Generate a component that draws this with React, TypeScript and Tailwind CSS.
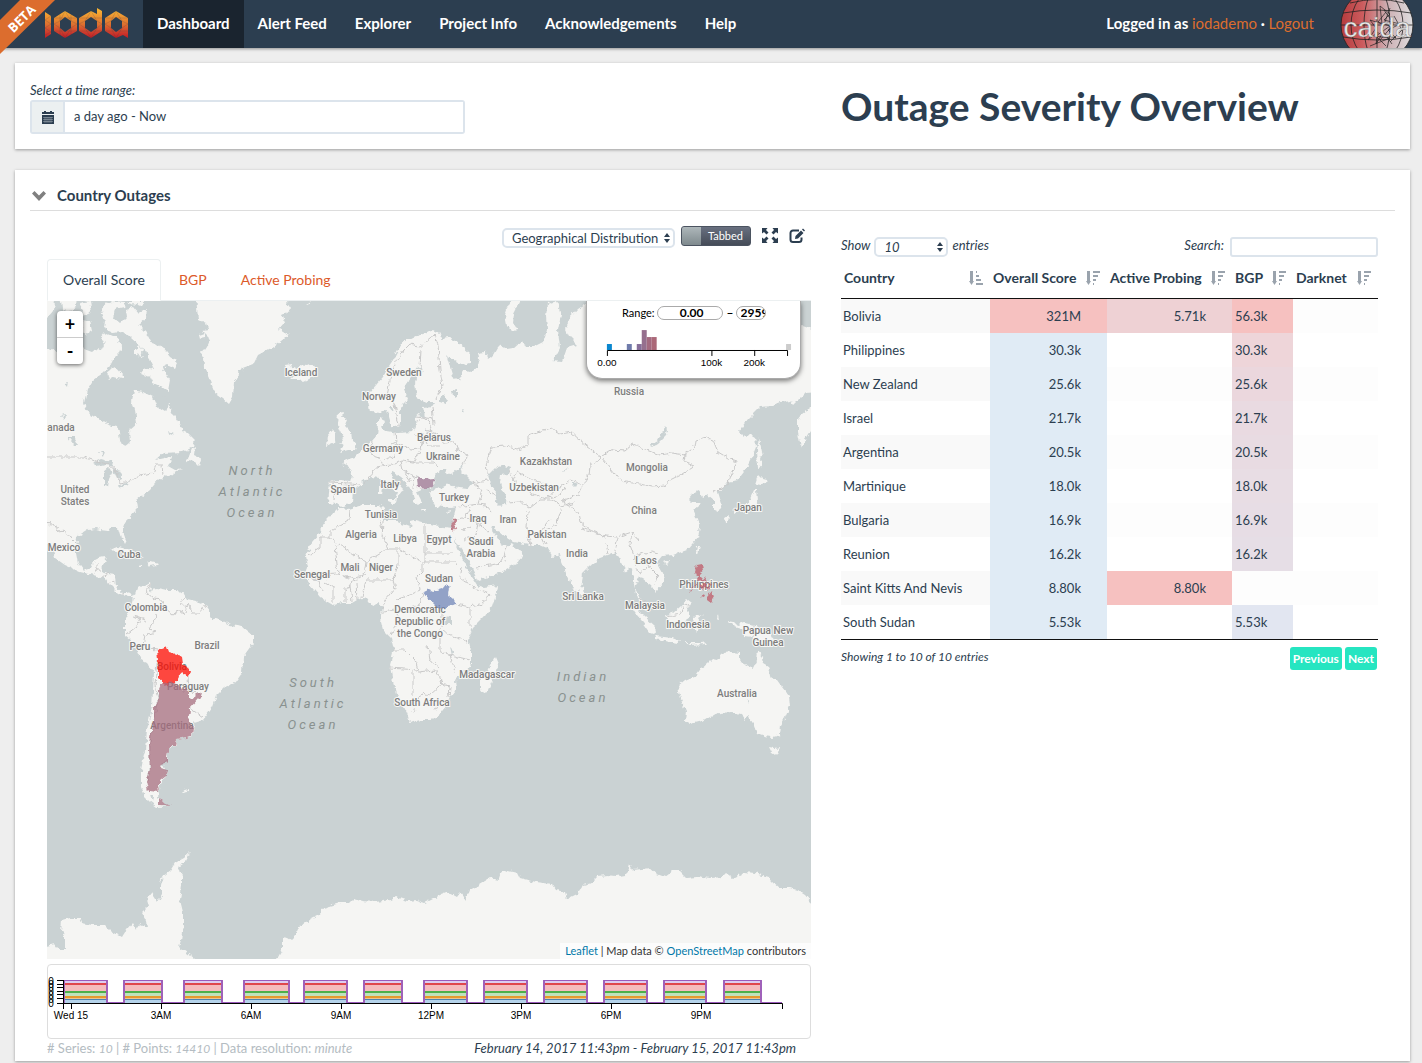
import React, { useState } from "react";

const navItems = ["Dashboard", "Alert Feed", "Explorer", "Project Info", "Acknowledgements", "Help"];

const columns = [
  { label: "Country", width: "w-[149px]", asc: true },
  { label: "Overall Score", width: "w-[117px]", asc: false },
  { label: "Active Probing", width: "w-[125px]", asc: false },
  { label: "BGP", width: "w-[61px]", asc: false },
  { label: "Darknet", width: "w-[85px]", asc: false },
];

const rows = [
  { country: "Bolivia", overall: "321M", overallBg: "bg-[#f6c1c0]", probing: "5.71k", probingBg: "bg-[#eed1d4]", bgp: "56.3k", bgpBg: "bg-[#f6c1c0]" },
  { country: "Philippines", overall: "30.3k", overallBg: "bg-[#e0ebf5]", probing: "", probingBg: "", bgp: "30.3k", bgpBg: "bg-[#eed5d9]" },
  { country: "New Zealand", overall: "25.6k", overallBg: "bg-[#e0ebf5]", probing: "", probingBg: "", bgp: "25.6k", bgpBg: "bg-[#ebd7dd]" },
  { country: "Israel", overall: "21.7k", overallBg: "bg-[#e0ebf5]", probing: "", probingBg: "", bgp: "21.7k", bgpBg: "bg-[#e9dae1]" },
  { country: "Argentina", overall: "20.5k", overallBg: "bg-[#e0ebf5]", probing: "", probingBg: "", bgp: "20.5k", bgpBg: "bg-[#e8dbe2]" },
  { country: "Martinique", overall: "18.0k", overallBg: "bg-[#e0ebf5]", probing: "", probingBg: "", bgp: "18.0k", bgpBg: "bg-[#e8dde4]" },
  { country: "Bulgaria", overall: "16.9k", overallBg: "bg-[#e0ebf5]", probing: "", probingBg: "", bgp: "16.9k", bgpBg: "bg-[#e7dde5]" },
  { country: "Reunion", overall: "16.2k", overallBg: "bg-[#e0ebf5]", probing: "", probingBg: "", bgp: "16.2k", bgpBg: "bg-[#e6dee6]" },
  { country: "Saint Kitts And Nevis", overall: "8.80k", overallBg: "bg-[#e0ebf5]", probing: "8.80k", probingBg: "bg-[#f6c1c0]", bgp: "", bgpBg: "" },
  { country: "South Sudan", overall: "5.53k", overallBg: "bg-[#e0ebf5]", probing: "", probingBg: "", bgp: "5.53k", bgpBg: "bg-[#e2e6f1]" },
];

const land = [
  // North and Central America
  "M40 351L53 349L58 352L62 347L70 344L74 347L80 345L84 349L92 352L97 348L101 351L104 345L101 338L105 333L112 336L118 338L121 345L119 354L113 360L110 366L103 373L93 380L87 390L84 403L87 412L100 420L109 425L118 427L120 440L125 447L130 443L129 430L137 423L135 410L132 402L134 390L143 392L153 397L157 407L165 412L168 403L173 413L183 430L188 433L195 440L193 447L183 452L163 453L155 460L164 458L172 457L168 466L175 470L182 468L174 473L168 478L165 475L158 480L150 490L137 500L138 508L125 522L122 530L126 541L121 538L118 528L110 528L108 531L100 530L96 529L88 530L77 537L76 552L78 563L83 570L92 567L97 557L106 556L103 565L102 572L108 574L115 575L116 587L123 593L130 591L134 597L128 597L118 593L108 583L105 578L93 575L80 572L65 565L55 558L53 550L40 538Z",
  "M40 294L56 294L54 310L47 318L40 320ZM60 294L77 294L76 308L69 312L62 309ZM80 303L90 301L92 312L84 316ZM60 318L70 315L77 320L74 330L63 331ZM80 320L90 321L92 330L84 334Z",
  // Baffin and its neighbours
  "M101 310L106 303L113 301L125 302L124 307L115 309L113 318L120 324L127 317L126 309L133 307L138 313L147 309L146 319L139 325L147 333L152 343L163 347L170 356L178 361L174 369L166 365L163 370L170 380L168 391L160 386L153 383L150 377L140 373L144 368L154 370L150 362L146 350L138 345L130 338L122 331L112 332L104 328L105 321Z",
  "M127 301L145 301L141 306L132 304ZM135 349L139 346L143 350L141 356L135 354ZM107 372L115 366L124 376L122 379L114 377L109 380ZM187 461L192 449L195 447L194 455L202 459L200 466L196 462Z",
  "M99 367L102 369L103 373L100 371Z",
  // Greenland and Iceland
  "M196 294L198 320L206 324L208 330L203 331L210 338L206 347L202 353L204 365L210 380L215 393L222 398L229 404L233 397L234 382L240 370L253 365L258 355L273 347L289 335L282 331L279 329L285 322L282 314L290 310L286 304L295 294Z",
  "M199 335L205 333L205 338L200 339ZM286 365L292 364L293 368L299 365L307 366L312 364L316 370L313 377L303 382L297 379L291 379L293 374L288 373Z",
  // Cuba and Hispaniola
  "M110 550L117 547L128 549L137 553L143 557L133 556L123 552ZM147 563L151 561L159 563L157 565L149 566ZM138 566L143 565L143 567L138 567ZM122 540L126 540L124 544Z",
  // South America
  "M134 597L137 588L145 586L150 583L151 589L157 588L167 590L177 590L184 594L187 599L196 601L207 605L210 613L213 618L222 621L230 625L243 627L253 635L253 643L243 657L242 673L235 683L225 687L217 695L213 707L203 720L193 723L194 730L192 737L177 740L177 746L168 747L168 757L162 763L167 773L160 784L158 797L165 804L170 806L157 807L149 801L145 797L141 787L141 770L145 750L147 730L152 707L154 673L147 663L141 660L137 650L131 640L125 635L125 620L132 607Z",
  "M182 791L188 789L188 791L183 792Z",
  // Eurasia
  "M380 413L370 412L368 400L369 393L376 385L383 377L389 366L393 360L400 347L404 341L410 338L418 336L427 333L433 330L442 335L441 339L449 338L457 342L470 353L470 362L463 365L456 361L447 357L450 367L453 377L460 380L463 370L470 372L477 367L479 358L478 353L485 352L488 359L493 355L497 348L500 345L507 349L513 348L522 340L526 347L533 347L543 342L547 330L546 316L548 304L557 301L561 315L558 330L560 348L553 361L562 362L567 348L577 345L570 338L565 328L570 318L578 309L587 303L800 303L800 325L820 332L820 391L806 392L800 398L793 405L790 401L780 403L773 406L760 407L752 415L747 420L739 431L745 437L750 434L755 437L756 447L752 457L747 467L737 480L728 482L723 488L718 492L722 505L718 512L714 510L714 500L708 495L703 498L700 493L699 490L692 493L688 498L693 503L702 503L693 510L697 519L700 527L698 537L687 550L673 555L662 556L657 562L663 573L664 582L655 592L651 585L648 583L642 578L639 577L635 587L640 598L646 602L650 611L645 609L637 597L633 580L632 567L625 572L622 562L615 552L608 555L600 558L590 566L583 573L582 583L577 592L574 590L570 582L562 562L560 554L553 557L547 548L540 545L530 545L513 542L507 538L500 532L493 527L492 530L500 542L507 547L512 544L514 547L523 553L518 563L508 568L500 573L478 581L475 575L467 557L457 543L454 536L452 525L454 517L456 507L450 508L443 507L437 506L432 503L430 493L433 489L426 488L417 492L420 498L422 502L418 505L415 503L412 492L407 483L401 478L397 475L394 471L390 472L393 480L399 485L403 490L400 492L398 498L395 499L397 493L388 487L380 478L372 477L366 479L362 482L362 486L353 492L352 502L344 506L340 507L336 504L328 503L330 482L340 481L350 482L352 474L349 467L342 462L349 459L355 457L361 451L367 445L372 441L377 435L378 425L378 420L382 418L384 422L381 427L385 431L398 433L413 432L416 426L415 420L417 414L425 417L423 407L431 406L437 402L427 402L417 398L415 383L418 374L423 370L417 366L413 375L406 385L404 389L408 399L403 404L400 412L400 425L395 427L392 427L387 410Z",
  // Novaya Zemlya
  "M515 294L507 309L505 315L507 325L513 331L517 330L512 322L513 314L523 294Z",
  // Britain and Ireland
  "M338 413L344 412L343 417L348 420L345 427L351 433L352 440L357 444L355 450L347 450L340 452L344 446L340 443L344 437L340 432L337 424ZM327 436L332 430L336 433L335 442L326 446ZM307 303L310 301L308 305Z",
  // Mediterranean islands
  "M388 499L396 499L395 504L388 501ZM379 487L382 487L381 494L379 494ZM381 480L383 483L381 485ZM420 509L427 509L426 511L421 511ZM447 511L452 510L449 513Z",
  // Africa
  "M338 508L350 509L362 505L380 505L384 509L383 520L393 520L402 524L410 527L411 521L415 520L425 523L434 525L443 527L452 528L454 535L456 544L462 558L467 568L472 577L477 585L485 587L498 585L497 592L492 607L484 617L473 628L468 638L471 650L471 665L463 672L455 680L456 690L450 697L447 705L440 714L430 720L420 720L410 723L407 713L402 703L397 697L393 682L390 665L394 650L391 638L383 630L381 622L383 607L378 604L372 606L367 599L363 598L357 600L352 603L342 603L333 605L326 601L320 597L314 590L308 583L306 577L308 567L306 557L312 542L320 533L325 522L330 517L335 511Z",
  "M480 681L482 674L488 671L495 657L498 664L495 674L488 691L483 692L480 688Z",
  // Asian islands
  "M757 490L758 500L756 505L749 508L743 513L740 510L734 514L732 512L738 508L745 506L751 499L755 490ZM759 475L763 479L767 480L761 485L756 484ZM724 518L729 515L728 523L725 523ZM759 438L761 447L763 457L760 458L761 467L758 468L757 450ZM697 546L700 546L698 553L696 550ZM664 562L669 560L668 564L665 565ZM820 401L811 407L803 413L798 420L798 433L801 447L805 440L811 430L820 424Z",
  "M579 586L583 588L584 594L580 595ZM630 605L638 610L645 617L655 626L656 634L650 632L643 622L635 613ZM655 636L664 637L672 638L680 641L678 643L665 641L656 639ZM665 615L672 614L681 606L687 599L692 603L688 609L689 615L686 624L678 626L668 624ZM693 617L704 615L698 619L703 627L699 626L696 632L694 625ZM684 643L700 643L708 642L706 644L690 645ZM718 614L719 620L717 618ZM728 620L734 621L738 625L745 623L753 625L765 630L771 634L774 640L781 645L774 643L767 639L760 641L753 638L745 637L745 630L735 627Z",
  "M582 589L584 592L583 596L579 594Z",
  // Australia
  "M678 686L685 680L697 675L702 668L707 664L712 659L717 660L721 655L725 653L731 652L740 653L740 660L742 663L753 669L757 661L758 651L762 656L763 663L768 666L770 676L777 680L782 687L789 696L790 706L785 718L781 725L780 735L772 737L765 736L757 733L754 725L751 722L749 717L745 720L741 714L732 712L720 713L710 716L702 721L690 724L685 721L686 711L681 700Z",
  "M769 747L774 748L779 747L777 754L773 755Z",
  // Antarctica
  "M40 947L54 944L58 949L65 949L65 936L61 930L62 920L69 918L80 918L82 923L92 925L105 925L111 931L122 937L127 929L132 923L136 930L140 924L147 929L146 920L142 913L149 906L147 899L152 893L158 902L162 895L162 884L165 873L163 879L159 881L162 877L170 871L175 863L184 858L190 853L186 861L177 867L182 875L182 885L180 900L183 912L183 925L181 940L179 947L195 959L203 968L40 968Z",
  "M271 968L277 959L282 950L282 937L288 938L291 940L296 935L300 925L310 920L320 915L323 908L330 906L340 903L350 903L354 899L362 901L375 902L390 900L396 897L408 901L416 900L425 903L435 898L440 895L448 892L457 897L460 893L466 901L470 890L480 884L490 878L499 880L500 874L508 870L517 872L520 878L535 882L552 884L556 890L565 892L567 899L577 894L583 885L591 883L598 876L607 875L615 876L627 875L630 865L633 870L642 869L650 868L657 874L665 877L673 871L680 871L686 877L698 876L710 878L722 877L726 873L733 878L745 872L755 873L769 877L772 881L780 888L790 888L797 890L805 895L811 902L820 908L820 968Z",
];

const water = [
  // Great Lakes and smaller Canadian lakes
  "M93 463L101 459L108 461L113 462L112 466L105 465L97 467ZM104 473L110 468L112 472L108 480L107 487L104 486ZM113 469L120 471L123 478L117 479L115 475ZM117 487L125 483L130 480L126 485L119 489ZM68 437L74 437L78 445L74 445ZM64 383L68 382L67 387ZM61 416L65 414L64 420ZM100 452L104 452L103 456ZM168 432L173 434L170 436ZM155 400L160 395L167 398L166 408L158 409Z",
  // Black Sea, Azov, Caspian, Aral
  "M434 483L436 475L441 469L447 469L445 473L451 474L456 470L464 465L461 471L466 476L473 483L468 489L458 488L449 484L441 488L433 490Z",
  "M488 475L495 468L502 465L510 468L508 474L501 475L500 482L502 489L507 493L506 503L500 506L495 501L497 493L491 486Z",
  "M665 427L667 430L665 436L658 443L652 447L651 444L658 440ZM563 472L568 467L565 472ZM571 483L577 483L575 487ZM440 397L444 394L448 399L445 404L440 402ZM452 391L457 390L457 396L453 397ZM461 410L464 411L463 414ZM390 408L394 408L392 411ZM445 618L451 617L451 624L445 624ZM149 588L152 589L151 593ZM151 795L154 795L153 802ZM746 698L748 701L747 704ZM450 645L453 652L452 657Z",
];

const borders = [
  "M40 457L84 457L95 461L108 464L117 472L120 483L130 481L140 475L153 473L156 465L162 465L163 474M40 523L53 524L58 531L64 530L70 538L76 544M93 575L97 568L102 572M97 568L97 562M102 577L109 573M108 583L115 581M123 592L123 595",
  "M150 584L146 593L153 599L162 600L166 610L173 615L181 610L184 615L188 603L193 613L201 613L206 605M184 598L180 604L188 607M156 614L154 622L149 629L156 632L145 635L143 645L150 649L157 650M132 616L140 618L136 627L127 634M140 618L148 621M188 676L189 692L200 693M190 708L203 717M157 660L155 685L158 700L153 720L150 745L150 770L147 782M183 690L195 690",
  "M399 425L395 405L387 395L392 370L404 350L410 344L419 346L425 342L435 334M420 368L421 350M435 334L438 345L440 370L443 385L436 400",
  "M367 449L371 455L380 458L384 466L376 468L363 485M372 441L371 455M395 431L396 443L388 447L395 456L384 460M396 443L410 449L421 448L423 435L413 435M421 448L423 441L432 427L427 418L416 421M425 430L438 434L443 442L455 443L457 449L468 455L463 465M375 467L392 465L402 460L414 462L421 449M400 461L402 470L413 475L418 477M414 462L434 462L439 468M414 475L413 488M404 472L411 482M330 483L350 484L360 485M335 485L334 500M425 442L428 446L440 446M428 488L432 493M417 416L433 418M432 407L434 425",
  "M458 507L465 506L478 504L486 505L492 512M470 508L465 517L478 523L490 532M465 517L455 520M478 504L482 490L473 483M475 482L488 480M486 490L495 495M478 523L476 535L464 540M477 568L490 565L502 563L507 547M463 530L471 526",
  "M488 473L487 460L492 447L505 446L518 450L528 445L528 435L543 430L552 428L560 434L571 432L580 440L592 450L602 458L590 465L589 475L583 485L570 480L557 489L545 484L530 478L517 472L513 480L509 470M513 480L525 490L535 495L545 499L560 495L565 488M508 503L520 502L530 508L540 500L552 500L562 507L574 503M528 510L527 528L531 545M550 520L540 532L546 545M562 507L556 525L545 530M557 489L548 497M583 485L578 495L563 500L565 505L578 512L580 522L590 530L605 536L617 537L632 532L638 540",
  "M602 456L612 450L625 451L633 444L645 449L660 455L672 453L685 455L684 462L694 466L680 475L670 480L665 486L652 487L640 484L625 482L615 474L602 458M684 455L695 447L696 440L705 437L713 440L718 452L728 458L737 461L735 468L729 478L728 485L713 493M582 528L592 532L606 537M606 543L608 553M618 538L614 555M632 532L630 545L634 556L636 565M634 556L645 553L651 551L658 553M645 558L650 568L658 576L655 585M634 568L640 573L648 567M638 598L645 601M667 617L680 614L684 605L690 606M753 625L753 638",
  "M350 510L349 520L330 532L330 537L320 537L320 548L308 556M330 538L366 562L388 549L383 535L380 520M335 545L338 574L320 575M366 562L364 575L352 582L346 590M383 520L382 540M388 549L400 549L422 562L422 572L417 577L420 590M398 550L398 565L393 580L366 580L362 597M425 523L425 562L455 562L457 565M425 553L452 553M422 562L425 562M393 580L395 588L385 600L382 610M308 578L318 580L322 590M325 582L333 588L333 603M345 588L345 602M350 585L352 602M356 583L357 600M338 574L350 578L364 575M420 590L410 595L395 600M423 592L420 605L410 608M462 567L460 577L477 590L491 595L480 605L470 607L470 628M456 604L470 607M443 608L443 620L440 630L455 637L468 642M383 612L395 610L400 620L390 635M440 630L440 650L450 655L470 660M393 650L405 650L415 660L418 670L390 668M418 672L435 670L442 680L440 686L430 695L422 693L417 702L413 712M413 672L413 695M440 684L450 686L449 698M450 655L455 672M434 709L438 707M428 645L430 660L440 668",
];

const labels: [string, number, number][] = [
  ["anada", 61, 431], ["United", 75, 493], ["States", 75, 505], ["Mexico", 64, 551], ["Cuba", 129, 558],
  ["Colombia", 146, 611], ["Peru", 140, 650], ["Brazil", 207, 649], ["Bolivia", 172, 670], ["Paraguay", 188, 690],
  ["Argentina", 172, 729], ["Iceland", 301, 376], ["Sweden", 404, 376], ["Norway", 379, 400], ["Belarus", 434, 441],
  ["Germany", 383, 452], ["Ukraine", 443, 460], ["Italy", 390, 488], ["Spain", 343, 493], ["Turkey", 454, 501],
  ["Tunisia", 381, 518], ["Algeria", 361, 538], ["Libya", 405, 542], ["Egypt", 439, 543], ["Iraq", 478, 522],
  ["Iran", 508, 523], ["Saudi", 481, 545], ["Arabia", 481, 557], ["Mali", 350, 571], ["Niger", 381, 571],
  ["Senegal", 312, 578], ["Sudan", 439, 582], ["Democratic", 420, 613], ["Republic of", 420, 625], ["the Congo", 420, 637],
  ["Kazakhstan", 546, 465], ["Uzbekistan", 534, 491], ["Mongolia", 647, 471], ["Russia", 629, 395], ["China", 644, 514],
  ["Pakistan", 547, 538], ["India", 577, 557], ["Laos", 646, 564], ["Sri Lanka", 583, 600], ["Philippines", 704, 588],
  ["Malaysia", 645, 609], ["Indonesia", 688, 628], ["Papua New", 768, 634], ["Guinea", 768, 646], ["Japan", 748, 511],
  ["Madagascar", 487, 678], ["South Africa", 422, 706], ["Australia", 737, 697],
];

const oceans: [string, number, number][] = [
  ["North", 252, 475], ["Atlantic", 252, 496], ["Ocean", 252, 517],
  ["South", 313, 687], ["Atlantic", 313, 708], ["Ocean", 313, 729],
  ["Indian", 583, 681], ["Ocean", 583, 702],
];

const WorldMap = () => (
  <svg viewBox="47 301 764 658" preserveAspectRatio="xMidYMid slice" className="block h-full w-full bg-[#cad2d3]" role="img" aria-label="World outage map">
    <defs>
      {/* breaks the straight polygon edges up into a ragged coast line */}
      <filter id="coast" filterUnits="userSpaceOnUse" x="37" y="291" width="784" height="678" colorInterpolationFilters="sRGB">
        <feTurbulence type="fractalNoise" baseFrequency="0.2" numOctaves="2" seed="4" result="noise" />
        <feDisplacementMap in="SourceGraphic" in2="noise" scale="6" xChannelSelector="R" yChannelSelector="G" />
      </filter>
    </defs>
    <g filter="url(#coast)">
      <path d={land.join("")} fill="#f5f5f3" />
      <path d={water.join("")} fill="#cad2d3" />
      <path d={borders.join("")} fill="none" stroke="#c9c9c9" strokeLinejoin="round" />
    </g>
    <g textAnchor="middle" fill="#89918f" className="font-['Roboto',sans-serif] text-[13px] tracking-[3px] italic">
      {oceans.map(([name, x, y]) => (
        <text key={name + y} x={x} y={y}>{name}</text>
      ))}
    </g>
    <g textAnchor="middle" fill="#7d7d7d" stroke="#f7f7f5" strokeWidth="2" strokeLinejoin="round" paintOrder="stroke" className="font-['Roboto',sans-serif] text-[10px] font-medium">
      {labels.map(([name, x, y]) => (
        <text key={name} x={x} y={y}>{name}</text>
      ))}
    </g>
    {/* affected countries */}
    <g filter="url(#coast)" fillOpacity="0.74">
      <path fill="#ff0a00" d="M157 650L162 648L167 646L169 652L176 654L182 658L183 665L188 666L190 673L188 676L185 674L179 675L177 683L162 685L159 676L157 670L158 660Z" />
      <path fill="#a56c7e" d="M162 683L167 682L175 683L188 691L188 698L195 697L198 692L201 693L200 698L190 709L188 722L193 728L192 736L187 738L177 740L176 746L169 746L167 757L167 762L162 764L161 768L167 770L166 775L160 780L158 787L159 792L148 791L146 782L150 770L149 743L153 722L153 710L158 700L159 690ZM159 798L164 803L171 806L159 805Z" />
      <path fill="#98728f" d="M418 477L425 479L435 478L433 484L434 487L428 489L419 488Z" />
      <path fill="#b05b6b" d="M455 517L457 520L455 524L456 527L453 531L451 526L453 521Z" />
      <path fill="#6f84b8" d="M423 592L429 589L433 591L443 588L447 583L449 588L448 595L452 597L456 604L448 606L443 608L437 607L431 601L427 598Z" />
      <path fill="#bf5967" d="M697 565L702 564L703 568L701 574L699 576L702 579L706 578L708 582L704 580L699 581L697 577L695 572ZM704 583L707 584L706 588L704 587ZM709 581L711 585L709 587ZM708 587L710 591L707 589ZM707 597L712 591L714 597L711 602L707 599ZM696 585L690 593L688 594L694 586ZM701 597L706 594L704 598ZM700 583L704 586L702 590Z" />
    </g>
  </svg>
);

const IodaLogo = () => (
  <svg viewBox="0 0 84 32" className="h-8 w-[84px]" role="img" aria-label="ioda">
    <defs>
      <linearGradient id="ioda" gradientUnits="userSpaceOnUse" x1="0" y1="2" x2="0" y2="31">
        <stop offset="0" stopColor="#f9b233" />
        <stop offset="0.5" stopColor="#dd6f2f" />
        <stop offset="0.75" stopColor="#cf3f2d" />
        <stop offset="1" stopColor="#be1622" />
      </linearGradient>
    </defs>
    <g fill="url(#ioda)" fillRule="evenodd">
      <path d="M0 4L6 8V26L0 30Z" />
      <path d="M20 3L32 10V23L20 30L9 23V10ZM20 9L15 13V20L20 24L26 20V13Z" />
      <path d="M46 3L52 6V0L57 3V23L46 30L34 23V10ZM46 9L40 13V20L46 24L52 20V13Z" />
      <path d="M71 3L83 10V30L78 27L71 30L60 23V10ZM71 9L66 13V20L71 24L77 20V13Z" />
    </g>
    <path d="M0 12L6 8M0 12L6 16L0 20L6 24L0 27M9 10H32M9 23H32M9 16L15 13L20 3L26 13L32 16L26 20L20 30L15 20L9 16M15 7V13M26 7V13M15 27V20M26 27V20M34 10H57M34 23H57M34 16L40 13L46 3L52 13L57 16L52 20L46 30L40 20ZM60 10H83M60 23H83M60 16L66 13L71 3L77 13L83 16L77 20L71 30L66 20Z" fill="none" stroke="#2c3e50" strokeOpacity="0.3" strokeWidth="0.6" />
  </svg>
);

const CaidaLogo = () => (
  <svg viewBox="0 0 74 48" className="h-12 w-[74px]" role="img" aria-label="caida">
    <defs>
      <linearGradient id="globe" x1="0" x2="1">
        <stop offset="0" stopColor="#b53b3d" />
        <stop offset="0.3" stopColor="#cc5c5e" />
        <stop offset="0.65" stopColor="#cdb0b4" />
        <stop offset="1" stopColor="#dedee0" />
      </linearGradient>
    </defs>
    <circle cx="37" cy="25" r="36" fill="url(#globe)" />
    <g fill="none" stroke="#222" strokeWidth="0.8">
      <circle cx="37" cy="25" r="36" />
      <ellipse cx="37" cy="25" rx="26" ry="36" />
      <ellipse cx="37" cy="25" rx="13" ry="36" />
      <path d="M1 25H73M3 13Q37 7 71 13M3 37Q37 43 71 37M10 3Q37 -4 64 3M37 0V48" />
      <path d="M40 6L50 14L44 20L60 24L48 30L56 38L42 34L36 44L38 32L28 40L36 28L30 20L42 24ZM44 10L54 24L40 40M50 8L42 30L52 44M34 36L50 38L30 46M46 12L38 22L50 26L36 36L46 46M54 16L62 30L50 42" strokeWidth="0.7" />
    </g>
    <text x="37" y="37" textAnchor="middle" fill="#eaeaea" stroke="#777" strokeWidth="0.4" className="font-['Liberation_Sans',sans-serif] text-[28px] font-normal">caida</text>
  </svg>
);

const SortIcon = ({ asc }: { asc: boolean }) => (
  <svg viewBox="0 0 14 14" className="h-[14px] w-[14px] shrink-0" fill="#9aa3ad" aria-hidden="true">
    <path d="M1 0H4V10H5L2.500 14L0 10H1Z" />
    {asc ? (
      <path d="M7 0H8V2H7ZM7 4H10V6H7ZM7 8H12V10H7ZM7 12H14V14H7Z" />
    ) : (
      <path d="M7 0H14V2H7ZM7 4H12V6H7ZM7 8H10V10H7ZM7 12H8V14H7Z" />
    )}
  </svg>
);

const SelectArrows = () => (
  <svg viewBox="0 0 6 10" className="pointer-events-none absolute top-1/2 right-[5px] h-[10px] w-[6px] -translate-y-1/2" fill="#2c3e50" aria-hidden="true">
    <path d="M3 0L6 4H0ZM3 10L0 6H6Z" />
  </svg>
);

const histogram = [
  { x: 20, h: 6, fill: "#0a87cf" },
  { x: 40, h: 6, fill: "#6f7bab" },
  { x: 50, h: 6, fill: "#876f9a" },
  { x: 55, h: 20, fill: "#956f8e" },
  { x: 60, h: 13, fill: "#a36a80" },
  { x: 65, h: 13, fill: "#ab6878" },
  { x: 200, h: 6, fill: "#cccccc" },
];

const RangePanel = () => (
  <div className="absolute top-0 right-[10px] h-[78px] w-[215px] rounded-b-2xl border border-t-0 border-[#aaa] bg-white text-black shadow-[0_2px_5px_rgba(0,0,0,0.5)]">
    <div className="flex h-6 items-center pl-[35px] text-[12px]">
      <label htmlFor="range-min" className="text-[11px]">Range:</label>
      <input id="range-min" defaultValue="0.00" className="ml-[2px] h-[14px] w-[66px] rounded-full border border-[#aaa] bg-white pl-1 text-center font-bold" />
      <span className="mr-[2px] ml-1 font-bold">–</span>
      <input aria-label="Range maximum" defaultValue="295989" className="h-[14px] w-[30px] rounded-full border border-[#aaa] bg-white pl-1 font-bold" />
    </div>
    <svg viewBox="0 0 214 46" className="block h-[46px] w-full" aria-hidden="true">
      {histogram.map((bar) => (
        <rect key={bar.x} x={bar.x} y={25 - bar.h} width="5" height={bar.h} fill={bar.fill} />
      ))}
      <path d="M20.500 31V25.500H201.500V31M125.500 25V31M168.500 25V31" fill="none" stroke="#000" />
      <g textAnchor="middle" className="font-['Liberation_Sans',sans-serif] text-[10px]">
        <text x="20" y="41">0.00</text>
        <text x="125" y="41">100k</text>
        <text x="168" y="41">200k</text>
      </g>
    </svg>
  </div>
);

const pulses = [
  [17, 60], [77, 115], [137, 175], [197, 242], [257, 300], [317, 355],
  [377, 420], [437, 480], [497, 540], [557, 600], [617, 659], [677, 714],
];

const ticks: [string, number][] = [
  ["Wed 15", 24], ["3AM", 114], ["6AM", 204], ["9AM", 294], ["12PM", 384], ["3PM", 474], ["6PM", 564], ["9PM", 654],
];

const Timeline = () => (
  <svg viewBox="0 0 762 73" className="block h-[73px] w-full" role="img" aria-label="Outage timeline">
    {pulses.map(([start, end]) => (
      <g key={start}>
        <rect x={start - 1} y="15" width={end - start} height="4" fill="#ddcdf0" />
        <rect x={start - 1} y="19" width={end - start} height="8" fill="#f5bcbd" />
        <rect x={start - 1} y="27" width={end - start} height="4" fill="#bfe3bb" />
        <rect x={start - 1} y="31" width={end - start} height="3" fill="#ecc58a" />
        <rect x={start - 1} y="34" width={end - start} height="4" fill="#b5d3ea" />
        <path d={`M${start - 1} 19H${end - 1}`} stroke="#e0474c" strokeWidth="2" />
        <path d={`M${start - 1} 27H${end - 1}`} stroke="#4daf4a" strokeWidth="2" />
        <path d={`M${start - 1} 32H${end - 1}`} stroke="#e59a2f" strokeWidth="2" />
        <path d={`M${start - 1} 34.500H${end - 1}`} stroke="#4a83b4" strokeWidth="1" />
        <path d={`M${start - 1} 38V15M${end - 1} 38V15`} stroke="#a568b8" strokeWidth="2" />
      </g>
    ))}
    <path
      d={`M16 37.500${pulses.map(([start, end]) => `H${start - 1}V15.500H${end - 1}V37.500`).join("")}H734`}
      fill="none"
      stroke="#9a5bbb"
    />
    <path d="M9 15.500H16M9 19.500H16M9 22.500H16M9 26.500H16M9 29.500H16M9 33.500H16M9 38.500H16M15.500 15V44M15 38.500H734.500V44" fill="none" stroke="#000" />
    <g textAnchor="middle" className="font-['Liberation_Sans',sans-serif] text-[10px]">
      {[20, 23, 26, 30, 34, 38, 42].map((y) => (
        <text key={y} x="3" y={y}>0</text>
      ))}
      {ticks.map(([label, x]) => (
        <g key={label}>
          <path d={`M${x - 0.5} 38V44`} stroke="#000" />
          <text x={x - 1} y="54">{label}</text>
        </g>
      ))}
    </g>
  </svg>
);

const Navigation = () => (
  <header className="relative flex h-12 items-center bg-[#2c3e50] text-[15px] font-bold text-white shadow-[0_1px_3px_rgba(0,0,0,0.4)]">
    <svg viewBox="0 0 56 56" className="absolute top-0 left-0 h-14 w-14" role="img" aria-label="Beta">
      <path d="M0 20L20 0H55L0 54Z" fill="#dc6d2e" />
      <text x="0" y="0" transform="translate(25 22) rotate(-45)" textAnchor="middle" fill="#fff" className="font-['Open_Sans',sans-serif] text-[13px] font-bold">BETA</text>
    </svg>
    <a href="#home" className="ml-[45px] flex h-12 w-[98px] items-center">
      <IodaLogo />
    </a>
    <nav className="flex">
      {navItems.map((item) => (
        <a
          key={item}
          href={`#${item}`}
          className={item === "Dashboard" ? "h-12 bg-[#1a242f] px-[14px] leading-[46px]" : "h-12 px-[14px] leading-[46px]"}
        >
          {item}
        </a>
      ))}
    </nav>
    <div className="mr-[26px] ml-auto h-12 leading-[46px]">
      Logged in as <a href="#profile" className="font-normal text-[#dc6d2e]">iodademo</a> · <a href="#logout" className="font-normal text-[#dc6d2e]">Logout</a>
    </div>
    <a href="#caida" className="mr-2 h-12">
      <CaidaLogo />
    </a>
  </header>
);

const MapColumn = () => {
  const [tab, setTab] = useState("Overall Score");

  return (
    <div className="min-w-0 flex-1 pt-[15px]">
      <div className="flex h-[22px] items-start justify-end pr-[6px]">
        <div className="relative mt-[2px] mr-[6px]">
          <select aria-label="Visualization" className="block h-5 w-[173px] appearance-none rounded-[5px] border-2 border-[#dce4ec] bg-white pl-2 text-[13px] leading-4">
            <option>Geographical Distribution</option>
          </select>
          <SelectArrows />
        </div>
        <button type="button" className="flex h-5 w-[70px] overflow-hidden rounded-[3px] border border-[#4b5360] bg-gradient-to-b from-[#697080] to-[#454c58] text-[11px] leading-[18px] text-white">
          <span className="h-full w-[19px] bg-gradient-to-b from-[#aeb7ba] to-[#7f8a8e]" />
          <span className="flex-1 text-center">Tabbed</span>
        </button>
        <button type="button" aria-label="Full screen" className="mt-[2px] mr-px ml-[11px]">
          <svg viewBox="0 0 16 16" className="h-4 w-4" fill="#2c3e50" aria-hidden="true">
            <path d="M0 0H5.500L4 2L6.500 4.500L4.500 6.500L2 4L0 5.500ZM16 0V5.500L14 4L11.500 6.500L9.500 4.500L12 2L10.500 0ZM0 15V9.500L2 11L4.500 8.500L6.500 10.500L4 13L5.500 15ZM16 15H10.500L12 13L9.500 10.500L11.500 8.500L14 11L16 9.500Z" />
          </svg>
        </button>
        <button type="button" aria-label="Edit" className="mt-[2px] ml-[10px]">
          <svg viewBox="0 0 16 16" className="h-4 w-4" aria-hidden="true">
            <path d="M10 2.500H4A2.500 2.500 0 0 0 1.500 5V11.500A2.500 2.500 0 0 0 4 14H10A2.500 2.500 0 0 0 12.500 11.500V9.500" fill="none" stroke="#2c3e50" strokeWidth="2" />
            <path d="M6 11L6.500 8L12 2.500L14.500 5L9 10.500ZM13 1.500L14 0.500L16 2.500L15 3.500Z" fill="#2c3e50" />
          </svg>
        </button>
      </div>
      <div className="mt-[11px] flex h-[42px] border-b border-[#ecf0f1] text-[14px]" role="tablist">
        {["Overall Score", "BGP", "Active Probing"].map((name) => (
          <button
            key={name}
            type="button"
            role="tab"
            aria-selected={tab === name}
            onClick={() => setTab(name)}
            className={
              tab === name
                ? "mr-[2px] h-[42px] rounded-t border border-b-white border-[#ecf0f1] bg-white px-[15px] pb-[2px]"
                : "mr-[2px] h-[42px] px-4 pb-[2px] text-[#dc5a2a]"
            }
          >
            {name}
          </button>
        ))}
      </div>
      <div className="relative h-[658px] overflow-hidden">
        <WorldMap />
        <div className="absolute top-[10px] left-[10px] flex w-[26px] flex-col overflow-hidden rounded bg-white text-[18px] leading-none font-bold text-black shadow-[0_1px_4px_rgba(0,0,0,0.6)]">
          <button type="button" aria-label="Zoom in" className="h-[27px] border-b border-[#ccc]">+</button>
          <button type="button" aria-label="Zoom out" className="h-[26px]">-</button>
        </div>
        <RangePanel />
        <div className="absolute right-0 bottom-0 bg-white/70 px-[5px] text-[11px] leading-4 text-[#333]">
          <a href="#leaflet" className="text-[#0078a8]">Leaflet</a> | Map data © <a href="#osm" className="text-[#0078a8]">OpenStreetMap</a> contributors
        </div>
      </div>
      <div className="mt-[5px] rounded border border-[#ddd]">
        <Timeline />
      </div>
      <div className="flex h-[22px] items-start justify-between pr-[15px] text-[13px] leading-[19px]">
        <p className="text-[#b4bcc2]">
          # Series: <i className="text-[12px]">10</i> | # Points: <i className="text-[12px]">14410</i> | Data resolution: <i>minute</i>
        </p>
        <p className="italic">February 14, 2017 11:43pm - February 15, 2017 11:43pm</p>
      </div>
    </div>
  );
};

const OutageTable = () => (
  <div className="w-[537px] shrink-0 pt-[26px]">
    <div className="flex h-5 items-start justify-between text-[13px] leading-4 italic">
      <div className="flex items-start">
        <label htmlFor="page-size">Show</label>
        <div className="relative mx-1">
          <select id="page-size" className="block h-5 w-[74px] appearance-none rounded-[5px] border-2 border-[#dce4ec] bg-white pl-2 leading-4 italic">
            <option>10</option>
          </select>
          <SelectArrows />
        </div>
        <span>entries</span>
      </div>
      <div className="flex items-start">
        <label htmlFor="search">Search:</label>
        <input id="search" type="search" className="ml-[6px] h-5 w-[148px] rounded-[3px] border-2 border-[#dce4ec]" />
      </div>
    </div>
    <table className="w-full table-fixed border-separate border-spacing-0 text-[13px]">
      <thead>
        <tr className="h-[42px]">
          {columns.map((col) => (
            <th key={col.label} className={`${col.width} border-b border-[#111] p-0 pr-[7px] pl-[3px] text-left align-middle text-[14px] font-bold whitespace-nowrap`}>
              <div className="flex items-center justify-between">
                {col.label}
                <SortIcon asc={col.asc} />
              </div>
            </th>
          ))}
        </tr>
      </thead>
      <tbody>
        {rows.map((row) => (
          <tr key={row.country} className="group h-[34px] odd:bg-[#fdfdfd]">
            <td className="p-0 pt-[2px] pl-[2px] group-odd:bg-[#f9f9f9]">{row.country}</td>
            <td className={`${row.overallBg} p-0 pt-[2px] pr-[26px] text-right`}>{row.overall}</td>
            <td className={`${row.probingBg} p-0 pt-[2px] pr-[26px] text-right`}>{row.probing}</td>
            <td className={`${row.bgpBg} p-0 pt-[2px] pl-[3px]`}>{row.bgp}</td>
            <td className="p-0" />
          </tr>
        ))}
      </tbody>
    </table>
    <div className="flex items-start justify-between border-t border-[#111] pt-[7px]">
      <p className="text-[12px] leading-5 italic">Showing 1 to 10 of 10 entries</p>
      <div className="flex gap-[3px] pr-px text-[12px] font-bold text-white">
        <button type="button" className="h-[23px] rounded-[3px] bg-[#26e5c1] px-[3px]">Previous</button>
        <button type="button" className="h-[23px] rounded-[3px] bg-[#26e5c1] px-[3px]">Next</button>
      </div>
    </div>
  </div>
);

const App: React.FC = () => {
  return (
    <div className="min-h-screen bg-[#eee] font-['Lato',sans-serif] text-[#2c3e50]">
      <Navigation />
      <main className="flex flex-col gap-[21px] pt-[15px] pr-3 pl-[15px]">
        <section className="flex h-[86px] items-center justify-between bg-white px-[15px] shadow-[0_1px_3px_rgba(0,0,0,0.35)]">
          <div className="w-[435px] pt-[2px]">
            <label htmlFor="time-range" className="block text-[13px] leading-5 italic">Select a time range:</label>
            <div className="flex h-[34px] rounded-[3px] border-2 border-[#dce4ec]">
              <span className="flex w-[33px] items-center justify-center border-r-2 border-[#dce4ec] bg-[#ecf0f1]">
                <svg viewBox="0 0 12 13" className="h-[13px] w-3" aria-hidden="true">
                  <path d="M0 1H2V0H4V1H8V0H10V1H12V3H0ZM0 4H12V13H0Z" fill="#2c3e50" />
                  <path d="M1 6.500H11M1 8.500H11M1 10.500H11M3 6V12M5 6V12M7 6V12M9 6V12" stroke="#ecf0f1" strokeOpacity="0.6" strokeWidth="0.5" />
                </svg>
              </span>
              <input id="time-range" defaultValue="a day ago - Now" className="min-w-0 flex-1 bg-white px-[9px] text-[13px]" />
            </div>
          </div>
          <h1 className="mr-[17px] w-[537px] text-[39px] leading-none font-bold">Outage Severity Overview</h1>
        </section>
        <section className="bg-white px-[15px] shadow-[0_1px_3px_rgba(0,0,0,0.35)]">
          <h2 className="flex h-[41px] items-center border-b border-[#ddd] pt-[11px] text-[15px] font-bold">
            <svg viewBox="0 0 14 10" className="mr-[11px] ml-[2px] h-[10px] w-[14px]" fill="#808080" aria-hidden="true">
              <path d="M2.500 0L7 4.500L11.500 0L14 2.500L7 10L0 2.500Z" />
            </svg>
            Country Outages
          </h2>
          <div className="flex gap-[30px] px-[17px]">
            <MapColumn />
            <OutageTable />
          </div>
        </section>
      </main>
    </div>
  );
};

export default App;
